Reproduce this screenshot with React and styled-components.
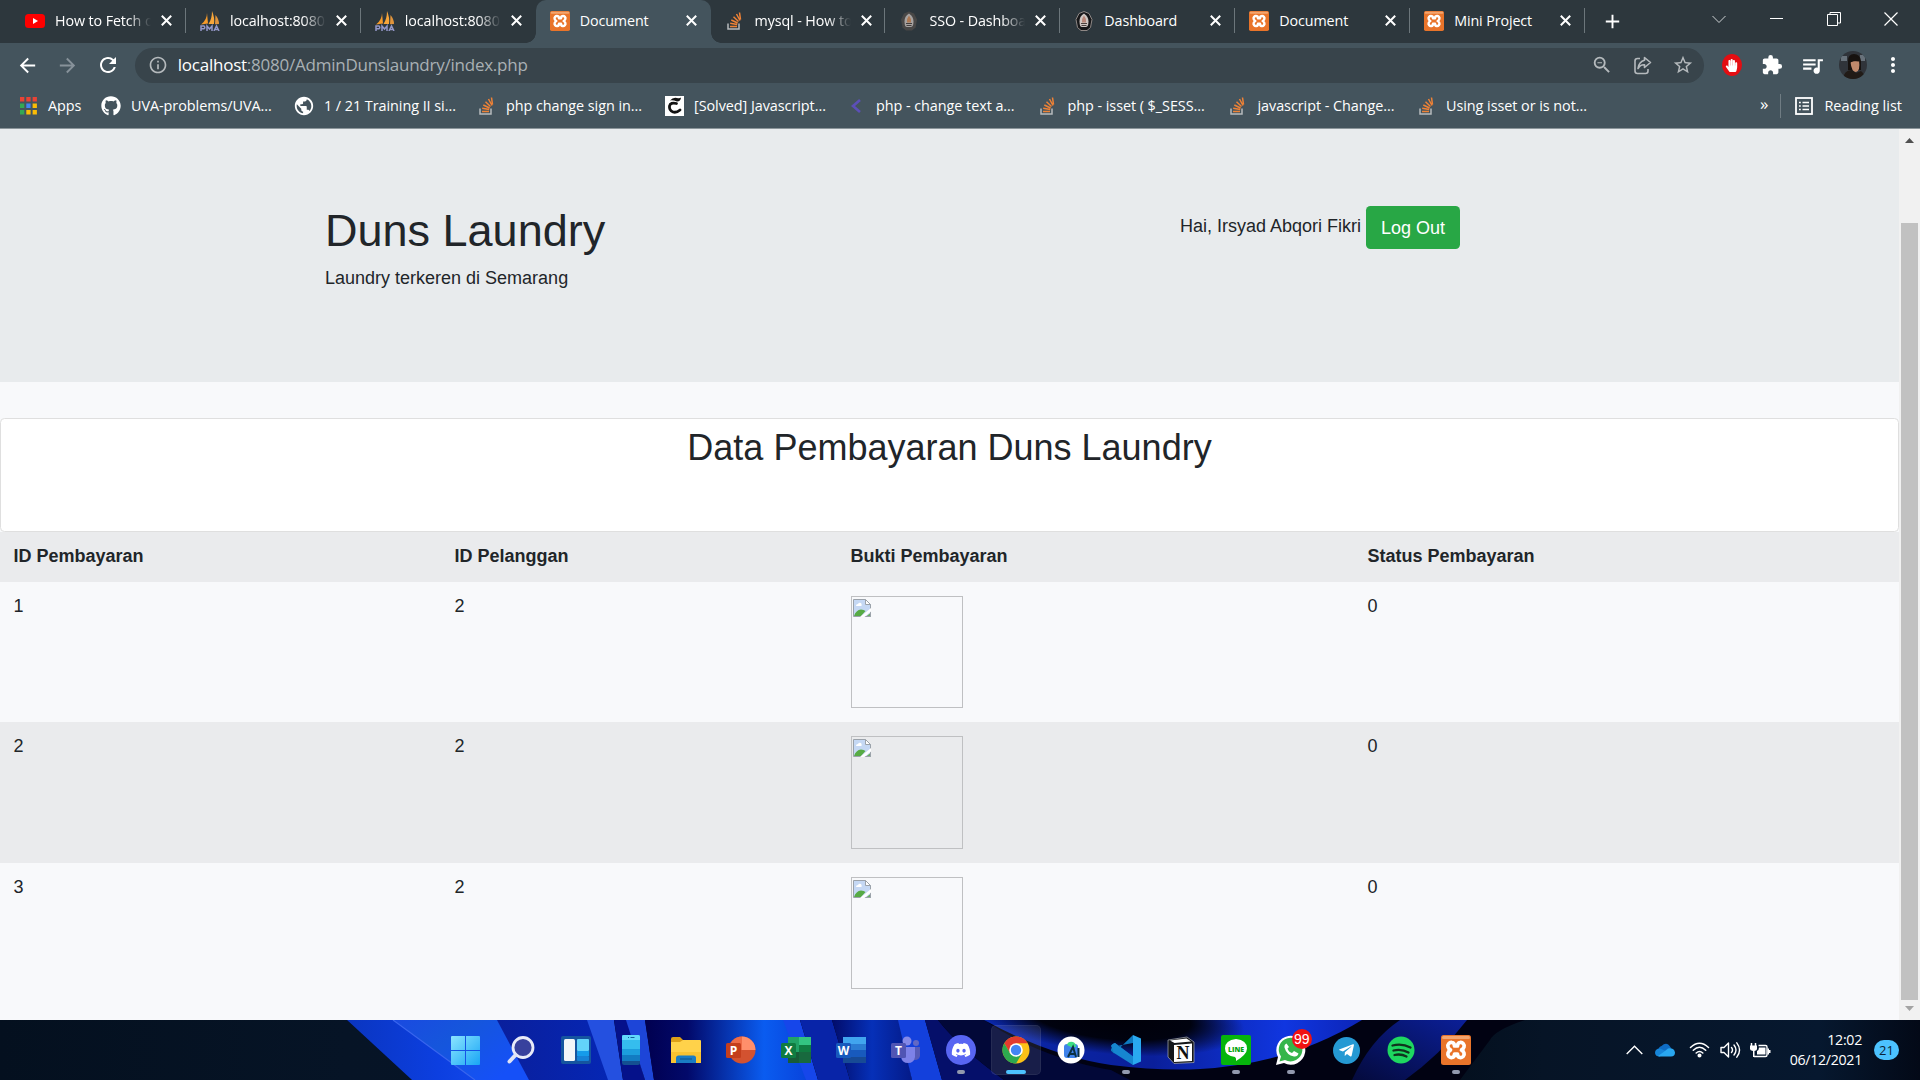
import React from "react";
import styled, { createGlobalStyle, css } from "styled-components";
import {
  MdArrowBack,
  MdArrowForward,
  MdRefresh,
  MdInfoOutline,
  MdExtension,
  MdQueueMusic,
  MdMoreVert,
  MdStarBorder,
  MdZoomOut,
  MdAdd,
  MdPublic,
} from "react-icons/md";
import { FaGithub, FaDiscord, FaTelegramPlane, FaHandPaper } from "react-icons/fa";

const uiFont = `"Open Sans", "Noto Sans", sans-serif`;
const pageFont = `"Liberation Sans", Arial, sans-serif`;

const GlobalStyle = createGlobalStyle`
  *, *::before, *::after { box-sizing: border-box; }
  html, body { margin: 0; padding: 0; overflow: hidden; }
  body { font-family: ${uiFont}; }
  svg { display: block; flex: none; }
`;

const Desktop = styled.div`
  width: 1920px;
  height: 1080px;
  display: flex;
  flex-direction: column;
  overflow: hidden;
`;

/* ---------- browser frame ---------- */

const TabStrip = styled.div`
  height: 43px;
  flex: none;
  display: flex;
  padding-left: 11px;
  background: #2d373d;
`;

const Tab = styled.div`
  width: 174.9px;
  height: 43px;
  flex: none;
  display: flex;
  align-items: center;
  padding: 0 0 2px 14px;
  position: relative;
  color: #fff;
  ${(p) =>
    p.$active &&
    css`
      background: #44545d;
      border-radius: 10px 10px 0 0;
      &::before,
      &::after {
        content: "";
        position: absolute;
        bottom: 0;
        width: 10px;
        height: 10px;
      }
      &::before {
        left: -10px;
        background: radial-gradient(circle at 0 0, transparent 9.5px, #44545d 10px);
      }
      &::after {
        right: -10px;
        background: radial-gradient(circle at 100% 0, transparent 9.5px, #44545d 10px);
      }
    `}
`;

const Favicon = styled.span`
  width: 20px;
  height: 20px;
  margin-right: 10px;
  display: flex;
  align-items: center;
  justify-content: center;
  flex: none;
`;

const TabLabel = styled.span`
  width: 98px;
  flex: none;
  font-size: 14.3px;
  line-height: 20px;
  letter-spacing: -0.1px;
  white-space: nowrap;
  ${(p) =>
    p.$fade &&
    css`
      mask-image: linear-gradient(to right, #000 74%, transparent 98%);
    `}
`;

const CloseSlot = styled.span`
  width: 27px;
  display: flex;
  justify-content: center;
  color: #fff;
`;

const TabDivider = styled.span`
  width: 1px;
  height: 25px;
  margin-left: auto;
  background: #6c767b;
`;

const NewTab = styled.div`
  width: 54px;
  padding-bottom: 1px;
  display: flex;
  align-items: center;
  justify-content: center;
  color: #fff;
`;

const WindowControls = styled.div`
  margin-left: auto;
  display: flex;
  height: 44px;
  align-items: center;
  padding-bottom: 6px;
`;

const WindowButton = styled.div`
  width: 57.3px;
  display: flex;
  justify-content: center;
`;

const Toolbar = styled.div`
  height: 44px;
  flex: none;
  display: flex;
  align-items: center;
  padding: 0 7px;
  background: #44545d;
  color: #fff;
`;

const ToolButton = styled.div`
  width: 40.3px;
  height: 40px;
  display: flex;
  align-items: center;
  justify-content: center;
  color: ${(p) => p.$color || "#fff"};
`;

const Omnibox = styled.div`
  width: 1570px;
  height: 35px;
  margin: 0 8px 0 7px;
  padding: 0 1px 0 13px;
  display: flex;
  align-items: center;
  border-radius: 18px;
  background: #38444b;
  color: #b5babd;
`;

const Address = styled.span`
  flex: 1;
  margin-left: 10px;
  font-size: 17px;
  line-height: 24px;
  letter-spacing: -0.24px;
  color: #a9b0b4;
  b {
    font-weight: 400;
    color: #fff;
  }
`;

const Avatar = styled.div`
  width: 28px;
  height: 28px;
  border-radius: 50%;
  overflow: hidden;
`;

const AdBadge = styled.div`
  width: 20px;
  height: 22px;
  border-radius: 50%;
  display: flex;
  align-items: center;
  justify-content: center;
  background: #e40d12;
`;

const BookmarkBar = styled.div`
  height: 42px;
  flex: none;
  display: flex;
  align-items: center;
  padding: 0 18px 3px 18px;
  background: #44545d;
  border-bottom: 1px solid #8b959a;
  color: #fff;
`;

const Bookmark = styled.div`
  width: ${(p) => p.$width}px;
  display: flex;
  align-items: center;
  white-space: nowrap;
  font-size: 14.4px;
  line-height: 20px;
  letter-spacing: -0.05px;
`;

const Overflow = styled.div`
  margin-left: auto;
  padding: 0 12px 4px 0;
  font-size: 17px;
  line-height: 20px;
`;

const ReadingList = styled.div`
  height: 24px;
  display: flex;
  align-items: center;
  gap: 11px;
  padding: 0 0 1px 14px;
  border-left: 1px solid #6f7c83;
  font-size: 14.5px;
`;

/* ---------- page ---------- */

const Viewport = styled.div`
  height: 891px;
  flex: none;
  display: flex;
  background: #f8f9fa;
`;

const Page = styled.main`
  flex: 1;
  overflow: hidden;
  font-family: ${pageFont};
  font-size: 18px;
  line-height: 23.3px;
  color: #212529;
  background: #f8f9fb;
`;

const Jumbotron = styled.header`
  height: 253px;
  padding: 75px 439px 0 325px;
  display: flex;
  justify-content: space-between;
  background: #e8ebed;
`;

const Title = styled.h1`
  margin: 0 0 9px;
  font-size: 45px;
  font-weight: 400;
  line-height: 54px;
`;

const Tagline = styled.p`
  margin: 0;
`;

const Greeting = styled.div`
  display: flex;
  align-items: flex-start;
  gap: 5px;
  padding-top: 2px;
  span {
    padding-top: 9px;
  }
`;

const LogoutButton = styled.button`
  width: 94px;
  height: 43px;
  padding: 1px 0 0;
  border: 0;
  border-radius: 4.5px;
  background: #28a745;
  color: #fff;
  font: 18px / 42px ${pageFont};
`;

const Card = styled.section`
  height: 114px;
  margin-top: 36px;
  padding-top: 7px;
  border: 1px solid #dfdfdf;
  border-radius: 4.5px;
  background: #fff;
  text-align: center;
`;

const CardTitle = styled.h2`
  margin: 0;
  font-size: 36px;
  font-weight: 400;
  line-height: 43px;
`;

const Table = styled.table`
  width: 100%;
  table-layout: fixed;
  border-collapse: collapse;
  th,
  td {
    padding: 12.5px 13.5px;
    vertical-align: top;
    text-align: left;
  }
`;

const Row = styled.tr`
  height: ${(p) => p.$height}px;
  background: ${(p) => (p.$striped ? "#eaebed" : "transparent")};
`;

const BrokenImage = styled.div`
  width: 112px;
  height: ${(p) => p.$height}px;
  margin-top: 1px;
  padding: 2px 1px;
  border: 1px solid #bfc0c2;
`;

const Scrollbar = styled.div`
  width: 21px;
  display: flex;
  flex-direction: column;
  align-items: center;
  padding: 8px 0 8px;
  background: #f1f1f1;
`;

const Thumb = styled.div`
  width: 17px;
  height: 777px;
  margin-top: 80px;
  margin-bottom: auto;
  background: #c1c1c1;
`;

/* ---------- taskbar ---------- */

const Taskbar = styled.footer`
  height: 60px;
  flex: none;
  position: relative;
  display: flex;
  justify-content: space-between;
  background: #06142a;
  color: #fff;
`;

const Wallpaper = styled.svg`
  position: absolute;
  inset: 0;
`;

const AppRow = styled.div`
  position: relative;
  display: flex;
  padding-left: 438px;
`;

const AppSlot = styled.div`
  width: 55.05px;
  height: 60px;
  padding-top: 5px;
  display: flex;
  flex-direction: column;
  align-items: center;
  position: relative;
`;

const AppFace = styled.div`
  width: 50px;
  height: 50px;
  flex: none;
  border-radius: 5px;
  display: flex;
  align-items: center;
  justify-content: center;
  ${(p) =>
    p.$focused &&
    css`
      background: rgba(255, 255, 255, 0.09);
      box-shadow: inset 0 0 0 1px rgba(255, 255, 255, 0.06);
    `}
`;

const Indicator = styled.span`
  position: absolute;
  top: 50px;
  width: ${(p) => (p.$focused ? 20 : 8)}px;
  height: 4px;
  border-radius: 2px;
  background: ${(p) => (p.$focused ? "#4cc2ff" : "#9299ae")};
`;

const CountBadge = styled.span`
  position: absolute;
  left: 28px;
  top: 9px;
  width: 20px;
  height: 20px;
  border-radius: 50%;
  background: #f01212;
  font-family: "Liberation Sans", sans-serif;
  font-size: 14px;
  line-height: 20px;
  text-align: center;
`;

const Tray = styled.div`
  position: relative;
  display: flex;
  align-items: center;
  padding-right: 21px;
`;

const TrayIcon = styled.div`
  width: ${(p) => p.$width}px;
  display: flex;
  justify-content: center;
`;

const Clock = styled.div`
  width: 86px;
  margin-right: 12px;
  padding-bottom: 1px;
  text-align: right;
  font-size: 14.2px;
  line-height: 20px;
  letter-spacing: -0.3px;
`;

const NoticeCount = styled.div`
  width: 25px;
  height: 20px;
  border-radius: 10px;
  background: #4cc2ff;
  color: #0b2236;
  font-size: 13px;
  line-height: 20px;
  text-align: center;
`;

/* ---------- drawings ---------- */

const CloseIcon = () => (
  <svg width="11" height="11" viewBox="0 0 11 11" stroke="#fff" strokeWidth="2">
    <path d="M.8.800l9.400 9.400M10.200.800L.8 10.200" />
  </svg>
);

const YoutubeIcon = () => (
  <svg width="20" height="14" viewBox="0 0 20 14">
    <rect width="20" height="14" rx="3.500" fill="#f00" />
    <path d="M8 4v6l5-3z" fill="#fff" />
  </svg>
);

const PmaIcon = () => (
  <svg width="20" height="20" viewBox="0 0 20 20">
    <path d="M7 2Q7 9 1 13.500L8 12.500z" fill="#f59a2a" />
    <path d="M12 0Q12 8 8.500 13h5.500Q15 7 12 0z" fill="#f7a63a" />
    <path d="M15.500 4q3.500 4 3.500 9l-4 .3z" fill="#e0943c" />
    <path d="M1 20v-5h3q1.600 1.400 0 2.800H1M7 20v-5l2.500 3 2.500-3v5M14 20l2.500-5 2.500 5M15 18.500h3" fill="none" stroke="#9397c8" strokeWidth="1.500" />
  </svg>
);

const XamppIcon = ({ size = 20 }) => (
  <svg width={size} height={size} viewBox="0 0 30 30">
    <rect width="30" height="30" rx="2.500" fill="#e9742a" />
    <rect x="1" y="1" width="28" height="3" rx="1.500" fill="#f3a56f" />
    <path
      d="M11 7.500a3.500 3.500 0 0 0-4 4.500q.6 2 2.500 3-1.900 1-2.500 3a3.500 3.500 0 0 0 4 4.500q2.500-.4 2.500-3.500h3q0 3.100 2.500 3.500a3.500 3.500 0 0 0 4-4.500q-.6-2-2.500-3 1.900-1 2.500-3a3.500 3.500 0 0 0-4-4.500q-2.500.4-2.500 3.500h-3q0-3.100-2.500-3.500z"
      fill="none"
      stroke="#fff"
      strokeWidth="3.700"
      strokeLinejoin="round"
    />
  </svg>
);

const StackIcon = () => (
  <svg width="15" height="18" viewBox="0 0 15 18">
    <path d="M1 11.500V17h11v-5.500" fill="none" stroke="#b6babd" strokeWidth="1.500" />
    <path d="M3 14.500h7M3.200 11.300l7 1.200M4.300 8l6.300 3M6.500 4.700l5 4.800M9.500 2l3.500 6.500M12.500.5l1 7" stroke="#ef8236" strokeWidth="1.500" />
  </svg>
);

const CrestIcon = ({ soft }) => (
  <svg width="18" height="20" viewBox="0 0 18 20" opacity={soft ? 0.75 : 1}>
    <path d="M9 .5l5 2 3 6-1.500 8-3.500 3H6l-3.500-3L1 8.500l3-6z" fill={soft ? "#514d4a" : "#171719"} stroke={soft ? "none" : "#8e8785"} />
    <path d="M9 2.500q4.500 3 4.500 8T11 16H7q-2.500 0-2.500-5.500t4.500-8z" fill="#cfc6c2" />
    <path d="M9 4.500q2.500 3 2 7H7q-.5-4 2-7z" fill={soft ? "#d88e59" : "#b88577"} />
    <path d="M6 12.500h6M6.500 14.500h5" stroke="#4b413e" />
  </svg>
);

const AppsIcon = () => (
  <svg width="17" height="18" viewBox="0 0 17 18">
    {["#ea4335", "#ea4335", "#ea4335", "#34a853", "#4285f4", "#fbbc05", "#34a853", "#fbbc05", "#fbbc05"].map((c, i) => (
      <rect key={i} x={(i % 3) * 6.3} y={Math.floor(i / 3) * 6.5} width="4.300" height="4.500" fill={c} />
    ))}
  </svg>
);

const SolvedIcon = () => (
  <svg width="19" height="20" viewBox="0 0 19 20">
    <rect width="19" height="20" fill="#fff" />
    <path d="M5 4.500q3-3.500 7-2.500 3 .6 4-.6-.3 4-4 4Q8 4 5 4.500z" fill="#111" />
    <path d="M11.500 7.500Q5.500 6 4.500 10q-.5 4.500 3.500 6 3.500 1 7-2" fill="none" stroke="#111" strokeWidth="2.800" strokeLinecap="round" />
  </svg>
);

const AngleIcon = () => (
  <svg width="14" height="16" viewBox="0 0 14 16">
    <path d="M11 2L4 8l7 6" fill="none" stroke="#5c4fb8" strokeWidth="2.600" />
  </svg>
);

const ShareIcon = () => (
  <svg width="19" height="19" viewBox="0 0 19 19" fill="none" stroke="currentColor" strokeWidth="1.600" strokeLinejoin="round">
    <path d="M7 2.500H4.500Q2 2.500 2 5v10q0 2.500 2.500 2.500h8q2.500 0 2.500-2.500v-2" />
    <path d="M11.500 1.500l6 5-6 5V8.800Q7.500 8.500 5 12.500 6 5.500 11.500 4.300z" />
  </svg>
);

const ListIcon = () => (
  <svg width="18" height="18" viewBox="0 0 18 18" fill="none" stroke="#fff">
    <rect x="1" y="1" width="16" height="16" strokeWidth="1.800" />
    <path d="M4 5.500h1.800M4 9h1.800M4 12.500h1.800M7.500 5.500H14M7.500 9H14M7.500 12.500H14" strokeWidth="1.500" />
  </svg>
);

const Portrait = () => (
  <svg width="28" height="28" viewBox="0 0 28 28">
    <rect width="28" height="28" fill="#30343a" />
    <path d="M2 5h6v5H2zM21 4h5v6h-5z" fill="#68727b" />
    <path d="M9 10q0-7 6-7t7 7v9H9z" fill="#17120f" />
    <path d="M11.500 11q5-1 8.500-2 1.500 11-3 12-4.500 0-5.500-10z" fill="#c18a6c" />
    <path d="M4 28q1-9 9-9l4 3 5-2q4 3 4 8z" fill="#211b17" />
    <path d="M10 12.500l4-2.500 6 .5V7l-5-2-5 2z" fill="#17120f" />
  </svg>
);

const BrokenGlyph = () => (
  <svg width="18" height="18" viewBox="0 0 18 18">
    <path d="M.5.500h12l5 5v12H.5z" fill="#c5d8f4" stroke="#9ba2aa" />
    <path d="M12.500.500v5h5z" fill="#fff" stroke="#9ba2aa" />
    <path d="M3 7q0-2 2-2 1-2 3-1 1 1 .5 3z" fill="#fff" />
    <path d="M1 17q2-6 7-6.500 3 0 4.500 1.500L8 17z" fill="#57ab45" />
    <path d="M7 18l11-9v3.500L11.500 18z" fill="#fff" />
    <path d="M13 17.500h4.500V14" fill="#6fae66" stroke="#9ba2aa" />
  </svg>
);

const StartIcon = () => (
  <svg width="29" height="29" viewBox="0 0 29 29">
    <defs>
      <linearGradient id="win" x2="1" y2="1">
        <stop stopColor="#8be5ff" />
        <stop offset="1" stopColor="#19a5f5" />
      </linearGradient>
    </defs>
    <path d="M0 1q0-1 1-1h13v14H0zM15 0h13q1 0 1 1v13H15zM0 15h14v14H1q-1 0-1-1zM15 15h14v13q0 1-1 1H15z" fill="url(#win)" />
  </svg>
);

const SearchIcon = () => (
  <svg width="28" height="28" viewBox="0 0 28 28">
    <circle cx="16" cy="11.500" r="10" fill="#38419d" stroke="#e8eaf8" strokeWidth="2.800" />
    <path d="M8.500 19L2.500 25.500" stroke="#dfe3f6" strokeWidth="4" strokeLinecap="round" />
  </svg>
);

const WidgetsIcon = () => (
  <svg width="30" height="28" viewBox="0 0 30 28">
    <rect width="30" height="28" rx="2" fill="#15559f" />
    <rect x="3" y="3" width="11" height="22" rx="1.500" fill="#f2f5f8" />
    <rect x="16" y="3" width="12" height="12" rx="1" fill="#63d3fa" />
    <rect x="16" y="15" width="12" height="5" fill="#159bea" />
    <rect x="16" y="20" width="12" height="5" rx="1" fill="#1682d6" />
  </svg>
);

const PhoneIcon = () => (
  <svg width="18" height="30" viewBox="0 0 18 30">
    <rect width="18" height="30" rx="2" fill="#144f91" />
    <path d="M0 2q0-2 2-2h14q2 0 2 2v24H0z" fill="#127bc2" />
    <path d="M0 2q0-2 2-2h14q2 0 2 2v18H0z" fill="#1c9ddd" />
    <path d="M0 2q0-2 2-2h14q2 0 2 2v12H0z" fill="#35bdee" />
    <path d="M0 2q0-2 2-2h14q2 0 2 2v3H0z" fill="#62d8fb" />
    <path d="M6 2.500h1M8.500 2.500h4" stroke="#13629b" />
  </svg>
);

const ExplorerIcon = () => (
  <svg width="30" height="27" viewBox="0 0 30 27">
    <path d="M0 2q0-2 2-2h7l3 3v5H0z" fill="#dda018" />
    <path d="M0 5h9l3-2h17q1 0 1 1v22H0z" fill="#ffd24a" />
    <path d="M0 15h30v11H0z" fill="#f9c331" />
    <path d="M5 26v-5q0-2.500 2.500-2.500h15Q25 18.500 25 21v5z" fill="#197cc4" />
    <path d="M9 22h12" stroke="#115a92" strokeWidth="1.200" />
  </svg>
);

const OfficeLetter = ({ letter, fill }) => (
  <>
    <rect x="0" y="7" width="15" height="15" rx="1.500" fill={fill} />
    <text x="7.500" y="18.700" fontFamily="Open Sans" fontSize="12" fontWeight="700" fill="#fff" textAnchor="middle">
      {letter}
    </text>
  </>
);

const PowerPointIcon = () => (
  <svg width="30" height="28" viewBox="0 0 30 28">
    <circle cx="16" cy="14" r="13.500" fill="#d35230" />
    <path d="M16 .5a13.500 13.500 0 0 1 13.500 13.500H16z" fill="#ff8f6b" />
    <path d="M16 .5A13.500 13.500 0 0 0 2.500 14H16z" fill="#ed6c47" />
    <OfficeLetter letter="P" fill="#c43e1c" />
  </svg>
);

const ExcelIcon = () => (
  <svg width="30" height="28" viewBox="0 0 30 28">
    <path d="M7 1h12v26H7z" fill="#21a366" />
    <path d="M18 1h12v8H18z" fill="#33c481" />
    <path d="M18 9h12v7H18z" fill="#107c41" />
    <path d="M7 16h11v11H7z" fill="#185c37" />
    <path d="M18 16h12v11H18z" fill="#18693e" />
    <OfficeLetter letter="X" fill="#107c41" />
  </svg>
);

const WordIcon = () => (
  <svg width="30" height="28" viewBox="0 0 30 28">
    <path d="M7 1h23v7H7z" fill="#41a5ee" />
    <path d="M7 8h23v6H7z" fill="#2b7cd3" />
    <path d="M7 14h23v7H7z" fill="#185abd" />
    <path d="M7 21h23v6H7z" fill="#174a95" />
    <OfficeLetter letter="W" fill="#185abd" />
  </svg>
);

const TeamsIcon = () => (
  <svg width="30" height="28" viewBox="0 0 30 28">
    <circle cx="25" cy="7" r="3" fill="#6268c4" />
    <circle cx="16" cy="5" r="4.500" fill="#8489e8" />
    <path d="M21 11h8v9q-1 4-5 4h-3z" fill="#565bb8" />
    <path d="M10 11h14v10q-1 6-7 6t-7-6z" fill="#7d82e8" />
    <OfficeLetter letter="T" fill="#5055b4" />
  </svg>
);

const Disc = styled.div`
  width: ${(p) => p.$size}px;
  height: ${(p) => p.$size}px;
  border-radius: 50%;
  display: flex;
  align-items: center;
  justify-content: center;
  background: ${(p) => p.$fill};
  color: #fff;
`;

const ChromeIcon = () => (
  <svg width="28" height="28" viewBox="0 0 28 28">
    <circle cx="14" cy="14" r="13.500" fill="#fbc116" />
    <path d="M2.300 7.200A13.500 13.500 0 0 1 25.700 7.200H14L8 17.200z" fill="#e33b2e" />
    <path d="M2.300 7.200A13.500 13.500 0 0 0 14 27.500L20 17.500 8.100 17.300z" fill="#2da94f" />
    <circle cx="14" cy="14" r="6.800" fill="#fff" />
    <circle cx="14" cy="14" r="5.200" fill="#4285f4" />
  </svg>
);

const StudioIcon = () => (
  <svg width="28" height="28" viewBox="0 0 28 28">
    <circle cx="14" cy="14" r="13.500" fill="#fff" />
    <rect x="7" y="8" width="14" height="14" rx="3" fill="#3f83ea" />
    <path d="M10 9q1-4 6-3 3 1 3 5h-5z" fill="#3ddc84" />
    <path d="M11 21l5-10 3 10M13 18h5M21.500 12v9" fill="none" stroke="#0a3142" strokeWidth="2" />
  </svg>
);

const CodeIcon = () => (
  <svg width="30" height="30" viewBox="0 0 30 30">
    <path d="M22 0L3 18.500l-3-2.700v-2L3 11.500 22 30V21.500L4 8 1 9.500 0 11l3 .5L22 8z" fill="#0d78bf" />
    <path d="M0 11q2-3 4-3l18 13.500V30L3 18z" fill="#1686d0" />
    <path d="M22 0l8 3.500v23L22 30z" fill="#29a9f0" />
  </svg>
);

const NotionIcon = () => (
  <svg width="28" height="28" viewBox="0 0 28 28">
    <path d="M1 4l19-3 7 5v20.500L7 27.500 1 21z" fill="#15171a" stroke="#aeb0b6" strokeWidth=".7" />
    <path d="M3 4.500l16.500-2L24 5.500 7.500 7z" fill="#fff" />
    <path d="M7 9l18-1.500v17.500L7 26z" fill="#fff" />
    <text x="16" y="23" fontFamily="Liberation Serif" fontSize="18" fontWeight="700" fill="#111" textAnchor="middle">N</text>
  </svg>
);

const LineIcon = () => (
  <svg width="30" height="30" viewBox="0 0 30 30">
    <rect width="30" height="30" rx="2" fill="#06b50c" />
    <path d="M15 4q11 1 11 9.500 0 6-11 12.500.5-3-1-4Q4 21 4 13.500 4 5 15 4z" fill="#fff" />
    <text x="15" y="16.500" fontFamily="Open Sans" fontSize="7" fontWeight="800" fill="#06a50c" textAnchor="middle">LINE</text>
  </svg>
);

const WhatsappIcon = () => (
  <svg width="30" height="30" viewBox="0 0 30 30">
    <path d="M0 30l2-8A14.500 14.500 0 1 1 8 28z" fill="#fff" />
    <path d="M3.500 26.500l1.500-5A11.800 11.800 0 1 1 9 25z" fill="#35b54a" />
    <path d="M10.500 8.500q-2.500 1-2 4 2 7.500 9.500 9 3.500.5 4.500-3l-4.500-2.500-2 2q-3.500-1-4.500-4.500L13 12z" fill="#fff" />
  </svg>
);

const SpotifyIcon = () => (
  <svg width="28" height="28" viewBox="0 0 28 28">
    <circle cx="14" cy="14" r="13.500" fill="#1ed760" />
    <path d="M5.500 9.500q9.500-2.500 18 2M6.500 14.500q8-2 15 2M7.500 19q6.500-1.500 12 1.500" fill="none" stroke="#10331d" strokeWidth="2.300" strokeLinecap="round" />
  </svg>
);

const OneDriveIcon = () => (
  <svg width="20" height="14" viewBox="0 0 20 14">
    <path d="M3 9Q3 4 6.500 3 12-2.500 16 5l-3 5z" fill="#0f6cc4" />
    <path d="M4.500 13.500q-4 0-4.500-3.500 0-4.500 5-4.500l9 4z" fill="#1685d8" />
    <path d="M3 13q6-4 10-7.500 6-1 7 4 0 4-4 4H4z" fill="#29a7f0" />
  </svg>
);

const WifiIcon = () => (
  <svg width="21" height="16" viewBox="0 0 21 16" fill="none" stroke="#fff" strokeWidth="1.500" strokeLinecap="round">
    <path d="M1.500 5.500q9-8.500 18 0M4.300 8.300q6.200-6 12.400 0M7.200 11q3.300-3 6.600 0" />
    <circle cx="10.500" cy="13.500" r="1.300" fill="#fff" />
  </svg>
);

const VolumeIcon = () => (
  <svg width="21" height="18" viewBox="0 0 21 18" fill="none" stroke="#fff" strokeWidth="1.400" strokeLinecap="round" strokeLinejoin="round">
    <path d="M1 6.500h3L8.500 2v14L4 11.500H1zM11.500 6.500q2 2.500 0 5M14 4q4 5 0 10M16.800 1.800q5.500 7.200 0 14.400" />
  </svg>
);

const BatteryIcon = () => (
  <svg width="21" height="17" viewBox="0 0 21 17">
    <path d="M1.500 1v3M5.500 1v3" stroke="#fff" strokeWidth="1.500" />
    <path d="M0 3.500h7V7q0 1.500-2.500 2v6H3V9Q0 8.500 0 7z" fill="#fff" />
    <path d="M8.500 3.500h7Q17 3.500 17 5v8q0 1.500-1.500 1.500H4" fill="none" stroke="#fff" strokeWidth="1.400" />
    <path d="M7 9q2-1 2-3.500h6.500v7H7zM17.500 6.500h1.500v1.500h1.500v3H19v1.500h-1.500z" fill="#fff" />
  </svg>
);

const WallpaperArt = () => (
  <Wallpaper width="1920" height="60" viewBox="0 0 1920 60">
    <defs>
      <linearGradient id="edge">
        <stop stopColor="#04101f" />
        <stop offset=".18" stopColor="#061426" />
        <stop offset=".78" stopColor="#06182f" />
        <stop offset="1" stopColor="#030917" />
      </linearGradient>
      <linearGradient id="petal">
        <stop stopColor="#0a35c0" />
        <stop offset=".5" stopColor="#0c3fe0" />
        <stop offset="1" stopColor="#1850f5" />
      </linearGradient>
      <linearGradient id="petalTop" x2="1" y2=".6">
        <stop stopColor="#1a4ae0" />
        <stop offset=".45" stopColor="#1556dc" />
        <stop offset="1" stopColor="#1550f8" />
      </linearGradient>
      <linearGradient id="shade">
        <stop stopColor="#0a1f9c" />
        <stop offset="1" stopColor="#0526b4" />
      </linearGradient>
      <linearGradient id="glow">
        <stop stopColor="#010050" />
        <stop offset=".25" stopColor="#02096a" />
        <stop offset=".7" stopColor="#0a5cf0" />
        <stop offset="1" stopColor="#083fd8" />
      </linearGradient>
      <linearGradient id="mid">
        <stop stopColor="#020c6a" />
        <stop offset=".5" stopColor="#0630b8" />
        <stop offset="1" stopColor="#041a88" />
      </linearGradient>
      <linearGradient id="wave" gradientUnits="userSpaceOnUse" x1="984" x2="1360" y1="0" y2="0">
        <stop stopColor="#0a27a8" />
        <stop offset=".45" stopColor="#0a1f9a" />
        <stop offset=".8" stopColor="#1036e0" />
        <stop offset="1" stopColor="#0c25b8" />
      </linearGradient>
      <radialGradient id="hollow" gradientUnits="userSpaceOnUse" cx="0" cy="0" r="1" gradientTransform="translate(1110 -4) rotate(6) scale(135 38)">
        <stop stopColor="#000008" />
        <stop offset=".6" stopColor="#00020f" />
        <stop offset="1" stopColor="#00020f" stopOpacity="0" />
      </radialGradient>
      <linearGradient id="tail" x1="1" x2="0" y2="1">
        <stop stopColor="#0b1f98" />
        <stop offset="1" stopColor="#040a3c" />
      </linearGradient>
    </defs>
    <rect width="1920" height="60" fill="url(#edge)" />
    <path d="M347 0H1530L1478 60H412z" fill="#010212" />
    <path d="M347 0H500L530 60H412z" fill="url(#petal)" />
    <path d="M393 0H497L529 60H475z" fill="url(#petalTop)" />
    <path d="M393 0L475 60" stroke="#3865ee" strokeWidth="1.200" />
    <path d="M497 0H590L610 60H529z" fill="url(#shade)" />
    <path d="M587 0H614L623 60H608z" fill="#2450e0" />
    <path d="M614 0H627L645 60H623z" fill="#05118a" />
    <path d="M626 0H645L654 60H645z" fill="#1d45d8" />
    <path d="M645 0H785L815 60H654z" fill="url(#glow)" />
    <path d="M783 0H800L818 60H806z" fill="#1646ea" />
    <path d="M800 0H832L850 60H818z" fill="#0824a8" />
    <path d="M832 0H900L912 60H850z" fill="url(#mid)" />
    <path d="M898 0H925L942 60H912z" fill="#1340dc" />
    <path d="M925 0H938Q960 28 1004 60H942z" fill="#050f6a" />
    <path d="M938 0H984Q1040 38 1111 50L1130 60H1004Q960 28 938 0z" fill="#020838" />
    <path d="M984 0Q1050 36 1111 45 1160 51 1200 49 1290 44 1362 0z" fill="url(#wave)" />
    <path d="M984 0Q1050 36 1111 45 1160 51 1200 49 1290 44 1362 0z" fill="url(#hollow)" />
    <path d="M1352 60Q1370 20 1400 0H1467Q1440 35 1405 60z" fill="url(#tail)" />
    <path d="M1525 0Q1495 10 1490 20L1460 60H1920V0z" fill="url(#edge)" />
  </Wallpaper>
);

/* ---------- data ---------- */

const tabs = [
  { icon: <YoutubeIcon />, label: "How to Fetch d", fade: true },
  { icon: <PmaIcon />, label: "localhost:8080", fade: true },
  { icon: <PmaIcon />, label: "localhost:8080", fade: true, noDivider: true },
  { icon: <XamppIcon />, label: "Document", active: true, noDivider: true },
  { icon: <StackIcon />, label: "mysql - How to", fade: true },
  { icon: <CrestIcon soft />, label: "SSO - Dashboa", fade: true },
  { icon: <CrestIcon />, label: "Dashboard" },
  { icon: <XamppIcon />, label: "Document" },
  { icon: <XamppIcon />, label: "Mini Project" },
];

const bookmarks = [
  { icon: <AppsIcon />, label: "Apps", width: 83 },
  { icon: <FaGithub size={20} />, label: "UVA-problems/UVA...", width: 193 },
  { icon: <MdPublic size={22} />, label: "1 / 21 Training II si...", width: 182 },
  { icon: <StackIcon />, label: "php change sign in...", width: 188 },
  { icon: <SolvedIcon />, label: "[Solved] Javascript...", width: 182 },
  { icon: <AngleIcon />, label: "php - change text a...", width: 191.5 },
  { icon: <StackIcon />, label: "php - isset ( $_SESS...", width: 190 },
  { icon: <StackIcon />, label: "javascript - Change...", width: 188.5 },
  { icon: <StackIcon />, label: "Using isset or is not...", width: 190 },
];

const payments = [
  { id: 1, customer: 2, status: 0, height: 140, imageHeight: 112 },
  { id: 2, customer: 2, status: 0, height: 141, imageHeight: 113 },
  { id: 3, customer: 2, status: 0, height: 140, imageHeight: 112 },
];

const apps = [
  { icon: <StartIcon /> },
  { icon: <SearchIcon /> },
  { icon: <WidgetsIcon /> },
  { icon: <PhoneIcon /> },
  { icon: <ExplorerIcon /> },
  { icon: <PowerPointIcon /> },
  { icon: <ExcelIcon /> },
  { icon: <WordIcon /> },
  { icon: <TeamsIcon /> },
  { icon: <Disc $size={30} $fill="#5865f2"><FaDiscord size={20} /></Disc>, open: true },
  { icon: <ChromeIcon />, open: true, focused: true },
  { icon: <StudioIcon /> },
  { icon: <CodeIcon />, open: true },
  { icon: <NotionIcon /> },
  { icon: <LineIcon />, open: true },
  { icon: <WhatsappIcon />, open: true, badge: 99 },
  { icon: <Disc $size={27} $fill="#2599d3"><FaTelegramPlane size={17} /></Disc> },
  { icon: <SpotifyIcon /> },
  { icon: <XamppIcon size={30} />, open: true },
];

export default function App() {
  return (
    <Desktop>
      <GlobalStyle />
      <TabStrip>
        {tabs.map((t, i) => (
          <Tab key={i} $active={t.active}>
            <Favicon>{t.icon}</Favicon>
            <TabLabel $fade={t.fade}>{t.label}</TabLabel>
            <CloseSlot>
              <CloseIcon />
            </CloseSlot>
            {!t.noDivider && <TabDivider />}
          </Tab>
        ))}
        <NewTab>
          <MdAdd size={23} />
        </NewTab>
        <WindowControls>
          <WindowButton>
            <svg width="14" height="9" viewBox="0 0 14 9" fill="none" stroke="#cfd3d5"><path d="M.5 1l6.500 6.500L13.500 1" /></svg>
          </WindowButton>
          <WindowButton>
            <svg width="13" height="2" viewBox="0 0 13 2"><path d="M0 .5h13" stroke="#fff" /></svg>
          </WindowButton>
          <WindowButton>
            <svg width="14" height="14" viewBox="0 0 14 14" fill="none" stroke="#fff"><path d="M.5 2.500h10v11H.5zM3 2.500V.500h10.500v10.500h-3" /></svg>
          </WindowButton>
          <WindowButton>
            <svg width="14" height="14" viewBox="0 0 14 14" stroke="#fff" strokeWidth="1.200"><path d="M.5.500l13 13M13.500.500l-13 13" /></svg>
          </WindowButton>
        </WindowControls>
      </TabStrip>

      <Toolbar>
        <ToolButton><MdArrowBack size={23} /></ToolButton>
        <ToolButton $color="#87929a"><MdArrowForward size={23} /></ToolButton>
        <ToolButton><MdRefresh size={24} /></ToolButton>
        <Omnibox>
          <MdInfoOutline size={20} />
          <Address><b>localhost</b>:8080/AdminDunslaundry/index.php</Address>
          <ToolButton $color="inherit"><MdZoomOut size={22} /></ToolButton>
          <ToolButton $color="inherit"><ShareIcon /></ToolButton>
          <ToolButton $color="inherit"><MdStarBorder size={22} /></ToolButton>
        </Omnibox>
        <ToolButton><AdBadge><FaHandPaper size={13} /></AdBadge></ToolButton>
        <ToolButton><MdExtension size={22} /></ToolButton>
        <ToolButton><MdQueueMusic size={25} /></ToolButton>
        <ToolButton><Avatar><Portrait /></Avatar></ToolButton>
        <ToolButton><MdMoreVert size={24} /></ToolButton>
      </Toolbar>

      <BookmarkBar>
        {bookmarks.map((b) => (
          <Bookmark key={b.label} $width={b.width}>
            <Favicon>{b.icon}</Favicon>
            {b.label}
          </Bookmark>
        ))}
        <Overflow>»</Overflow>
        <ReadingList><ListIcon />Reading list</ReadingList>
      </BookmarkBar>

      <Viewport>
        <Page>
          <Jumbotron>
            <div>
              <Title>Duns Laundry</Title>
              <Tagline>Laundry terkeren di Semarang</Tagline>
            </div>
            <Greeting>
              <span>Hai, Irsyad Abqori Fikri</span>
              <LogoutButton>Log Out</LogoutButton>
            </Greeting>
          </Jumbotron>
          <Card>
            <CardTitle>Data Pembayaran Duns Laundry</CardTitle>
          </Card>
          <Table>
            <colgroup>
              <col width="441" />
              <col width="396" />
              <col width="517" />
              <col />
            </colgroup>
            <tbody>
              <Row $height={50} $striped>
                <th>ID Pembayaran</th>
                <th>ID Pelanggan</th>
                <th>Bukti Pembayaran</th>
                <th>Status Pembayaran</th>
              </Row>
              {payments.map((p, i) => (
                <Row key={p.id} $height={p.height} $striped={i % 2 === 1}>
                  <td>{p.id}</td>
                  <td>{p.customer}</td>
                  <td><BrokenImage $height={p.imageHeight}><BrokenGlyph /></BrokenImage></td>
                  <td>{p.status}</td>
                </Row>
              ))}
            </tbody>
          </Table>
        </Page>
        <Scrollbar>
          <svg width="9" height="6" viewBox="0 0 9 6"><path d="M0 6L4.500 1 9 6z" fill="#505050" /></svg>
          <Thumb />
          <svg width="9" height="6" viewBox="0 0 9 6"><path d="M0 0h9L4.500 5z" fill="#a3a3a3" /></svg>
        </Scrollbar>
      </Viewport>

      <Taskbar>
        <WallpaperArt />
        <AppRow>
          {apps.map((a, i) => (
            <AppSlot key={i}>
              <AppFace $focused={a.focused}>{a.icon}</AppFace>
              {a.open && <Indicator $focused={a.focused} />}
              {a.badge && <CountBadge>{a.badge}</CountBadge>}
            </AppSlot>
          ))}
        </AppRow>
        <Tray>
          <TrayIcon $width={30}>
            <svg width="17" height="10" viewBox="0 0 17 10" fill="none" stroke="#fff" strokeWidth="1.400"><path d="M.7 9L8.500 1.200 16.300 9" /></svg>
          </TrayIcon>
          <TrayIcon $width={32}><OneDriveIcon /></TrayIcon>
          <TrayIcon $width={36}><WifiIcon /></TrayIcon>
          <TrayIcon $width={27}><VolumeIcon /></TrayIcon>
          <TrayIcon $width={32}><BatteryIcon /></TrayIcon>
          <Clock>12:02<br />06/12/2021</Clock>
          <NoticeCount>21</NoticeCount>
        </Tray>
      </Taskbar>
    </Desktop>
  );
}
